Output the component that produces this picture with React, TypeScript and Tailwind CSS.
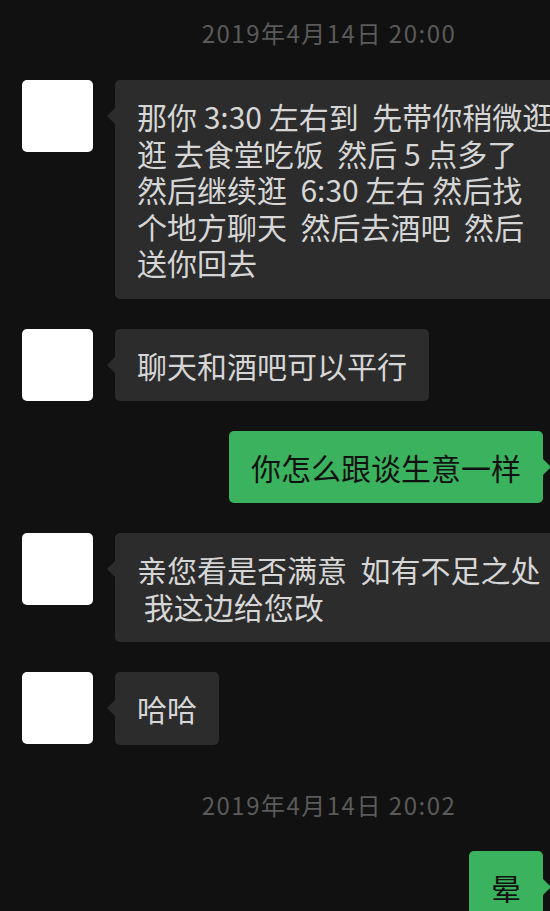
// chat screen in dark mode
import React from "react";

const font = { fontFamily: '"Noto Sans CJK SC", "Noto Sans", sans-serif' };

// timestamp line between message groups (screen is cropped, so centre sits right of middle)
function Stamp({ text }: { text: string }) {
    return (
        <div className="pl-[108px] text-center text-[24px] leading-[32px] text-[#5a5a5a] tracking-[1.5px]">{text}</div>
    );
}

// message from the other person, white avatar on the left
function LeftMsg({ lines }: { lines: string[] }) {
    return (
        <div className="flex items-start pl-[22px]">
            <div className="w-[71px] h-[72px] shrink-0 rounded-[5px] bg-white" />
            <div className="relative ml-[22px] shrink-0 rounded-[5px] bg-[#2c2c2c] px-[22px] py-[18px] text-[30px] leading-[36.5px] text-[#d6d6d6] whitespace-pre">
                <span className="absolute left-[-8px] top-[28px] h-0 w-0 border-y-[8px] border-y-transparent border-r-[8px] border-r-[#2c2c2c]" />
                {lines.map((l, i) => (
                    <div key={i}>{l}</div>
                ))}
            </div>
        </div>
    );
}

// my own message, green bubble on the right
function RightMsg({ text }: { text: string }) {
    return (
        <div className="flex justify-end pr-[7px]">
            <div className="relative rounded-[5px] bg-[#3bb35e] px-[22px] py-[18px] text-[30px] leading-[36px] text-[#111111] whitespace-pre">
                <span className="absolute right-[-8px] top-[28px] h-0 w-0 border-y-[8px] border-y-transparent border-l-[8px] border-l-[#3bb35e]" />
                {text}
            </div>
        </div>
    );
}

export default function App() {
    return (
        <div className="w-[550px] h-[911px] overflow-hidden bg-[#111111]" style={font}>
            <div className="flex flex-col pt-[17px]">
                <Stamp text="2019年4月14日 20:00" />
                <div className="mt-[31px]">
                    <LeftMsg
                        lines={[
                            "那你 3:30 左右到  先带你稍微逛",
                            "逛 去食堂吃饭  然后 5 点多了",
                            "然后继续逛  6:30 左右 然后找",
                            "个地方聊天  然后去酒吧  然后",
                            "送你回去",
                        ]}
                    />
                </div>
                <div className="mt-[30px]">
                    <LeftMsg lines={["聊天和酒吧可以平行"]} />
                </div>
                <div className="mt-[30px]">
                    <RightMsg text="你怎么跟谈生意一样" />
                </div>
                <div className="mt-[30px]">
                    <LeftMsg lines={["亲您看是否满意  如有不足之处", " 我这边给您改"]} />
                </div>
                <div className="mt-[30px]">
                    <LeftMsg lines={["哈哈"]} />
                </div>
                <div className="mt-[44px]">
                    <Stamp text="2019年4月14日 20:02" />
                </div>
                <div className="mt-[30px]">
                    <RightMsg text="晕" />
                </div>
            </div>
        </div>
    );
}
